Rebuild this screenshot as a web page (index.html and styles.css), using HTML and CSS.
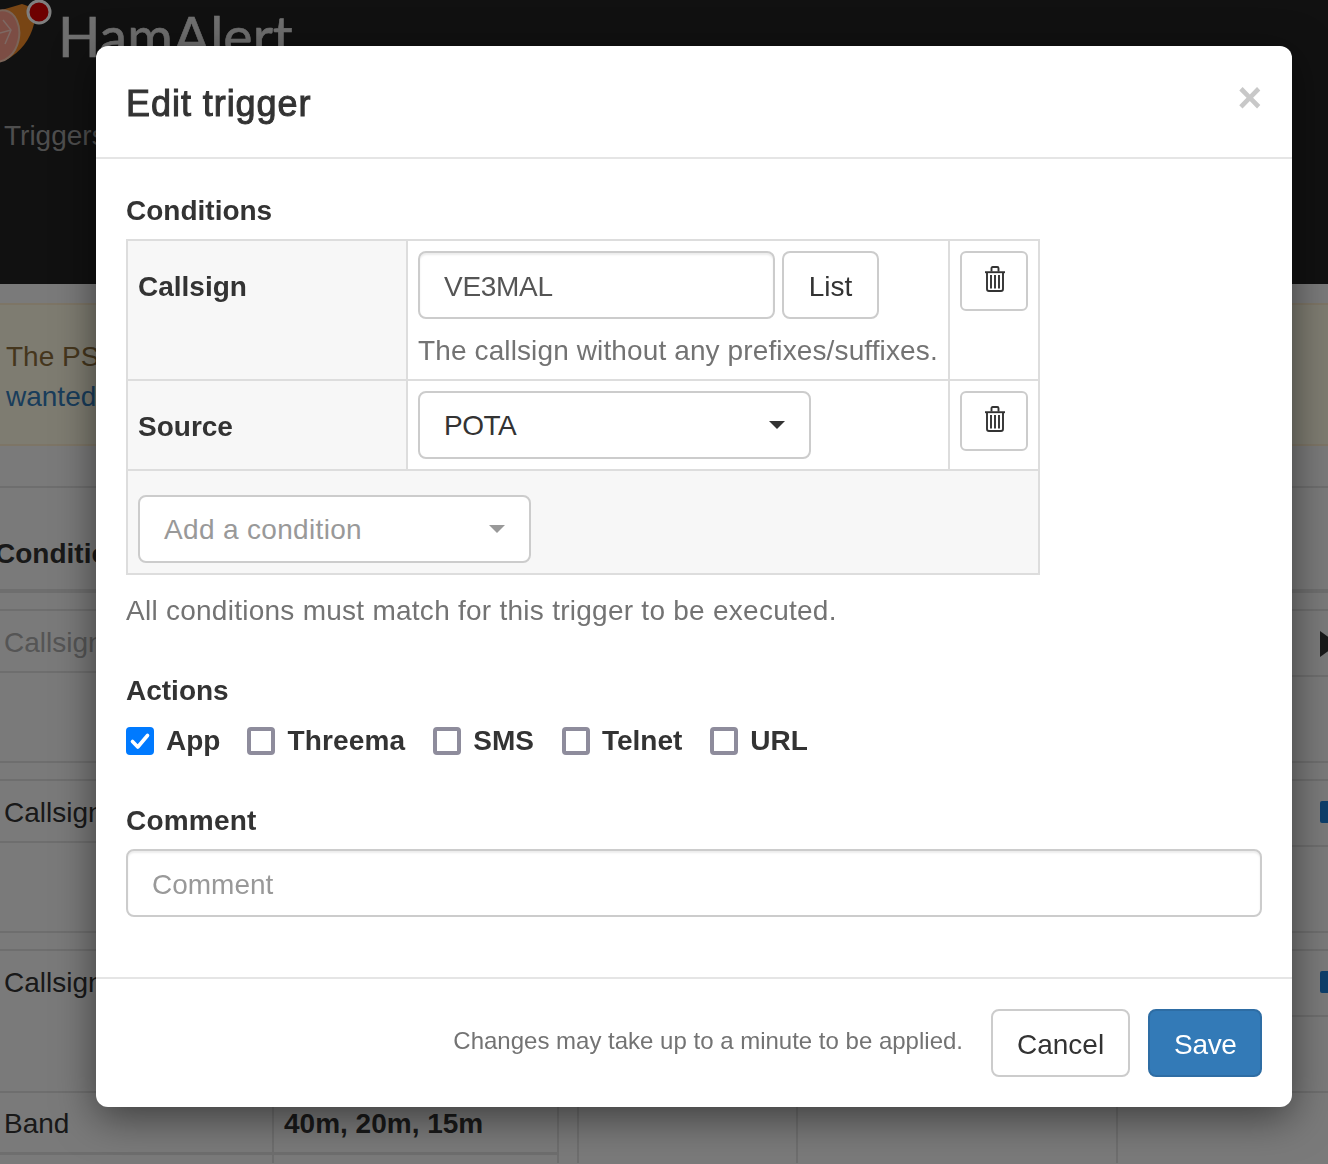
FILE: index.html
```html
<!DOCTYPE html>
<html lang="en">
  <head>
    <meta charset="UTF-8" />
    <title>HamAlert</title>
    <link rel="stylesheet" href="styles.css">
  </head>
  <body>
    <!-- page behind the dialog -->
    <div class="page">
      <header class="topbar">
        <div class="brand">
          <svg class="brand-logo" width="60" height="66" viewBox="0 0 60 66">
            <path d="M-12 14 L22 4 Q38 8 34 24 Q28 48 6 60 L-12 62 Z" fill="#f08a28"/>
            <ellipse cx="0" cy="36" rx="19" ry="26" transform="rotate(12 0 36)" fill="#f89a88" stroke="#f5c8b0" stroke-width="2"/>
            <path d="M3 20 L11 30 L5 44 M-4 34 L11 30" fill="none" stroke="#fbd0c4" stroke-width="1.5"/>
            <circle cx="39" cy="12" r="11" fill="#dc0000" stroke="#fff" stroke-width="3"/>
          </svg>
          <span class="brand-name">HamAlert</span>
        </div>
        <div class="nav-link">Triggers</div>
      </header>

      <div class="alert">
        <div>The PSK Reporter feed is back</div>
        <a class="alert-link">wanted</a>
      </div>
      <hr class="divider" />
      <h2 class="list-title">Conditions</h2>

      <div class="row row-first">
        <div class="side side-left side-short"><span class="muted">Callsign</span></div>
        <div class="side side-right side-tall"><span class="marker-play"></span></div>
      </div>
      <div class="row row-next">
        <div class="side side-left side-short">Callsign</div>
        <div class="side side-right side-tall"><span class="marker-blue"></span></div>
      </div>
      <div class="row row-last">
        <div class="side side-left side-open">Callsign</div>
        <div class="side side-right side-tall"><span class="marker-blue"></span></div>
      </div>

      <div class="band-row">
        <div class="band-cell band-name">Band</div>
        <div class="band-cell band-value">40m, 20m, 15m</div>
        <div class="band-col band-col-a"></div>
        <div class="band-col band-col-b"></div>
      </div>
    </div>

    <div class="backdrop"></div>

    <div class="modal">
      <div class="modal-header">
        <h4 class="modal-title">Edit trigger</h4>
        <span class="close">&times;</span>
      </div>

      <div class="modal-body">
        <div class="section-label">Conditions</div>
        <table class="conditions">
          <tr class="cond-callsign">
            <th>Callsign</th>
            <td class="cond-main">
              <div class="input-line">
                <input class="form-control callsign-input" type="text" value="VE3MAL" />
                <button class="btn btn-list">List</button>
              </div>
              <div class="help-inline">The callsign without any prefixes/suffixes.</div>
            </td>
            <td class="cond-del">
              <button class="btn-del">
                <svg width="22" height="26" viewBox="0 0 22 26" fill="none" stroke="#333" stroke-width="1.9">
                  <path d="M1 6.2H21"/>
                  <path d="M7.5 5.5V2.2Q7.5 1 8.7 1H13.3Q14.5 1 14.5 2.2V5.5"/>
                  <path d="M3 6.5V23Q3 25 5 25H17Q19 25 19 23V6.5"/>
                  <path d="M7 9V22.5M11 9V22.5M15 9V22.5"/>
                </svg>
              </button>
            </td>
          </tr>
          <tr class="cond-source">
            <th>Source</th>
            <td class="cond-main">
              <div class="form-control select-box source-select">POTA<span class="caret"></span></div>
            </td>
            <td class="cond-del">
              <button class="btn-del">
                <svg width="22" height="26" viewBox="0 0 22 26" fill="none" stroke="#333" stroke-width="1.9">
                  <path d="M1 6.2H21"/>
                  <path d="M7.5 5.5V2.2Q7.5 1 8.7 1H13.3Q14.5 1 14.5 2.2V5.5"/>
                  <path d="M3 6.5V23Q3 25 5 25H17Q19 25 19 23V6.5"/>
                  <path d="M7 9V22.5M11 9V22.5M15 9V22.5"/>
                </svg>
              </button>
            </td>
          </tr>
          <tr class="cond-add">
            <td colspan="3">
              <div class="form-control select-box add-select">Add a condition<span class="caret caret-light"></span></div>
            </td>
          </tr>
        </table>
        <p class="help-block">All conditions must match for this trigger to be executed.</p>

        <div class="section-label actions-label">Actions</div>
        <div class="actions">
          <label class="check check-app"><span class="box box-on">
            <svg width="28" height="28" viewBox="0 0 28 28"><path d="M6.5 14.5L11.8 20L21.5 8.5" fill="none" stroke="#fff" stroke-width="3.6" stroke-linecap="round" stroke-linejoin="round"/></svg>
          </span>App</label>
          <label class="check check-threema"><span class="box"></span>Threema</label>
          <label class="check"><span class="box"></span>SMS</label>
          <label class="check"><span class="box"></span>Telnet</label>
          <label class="check"><span class="box"></span>URL</label>
        </div>

        <div class="section-label comment-label">Comment</div>
        <input class="form-control comment-input" type="text" placeholder="Comment" />
      </div>

      <div class="modal-footer">
        <span class="footer-note">Changes may take up to a minute to be applied.</span>
        <button class="btn btn-cancel">Cancel</button>
        <button class="btn btn-save">Save</button>
      </div>
    </div>
  </body>
</html>
```

FILE: styles.css
```css
* {
  box-sizing: border-box;
}

html,
body {
  margin: 0;
  height: 1164px;
  overflow: hidden;
}

body {
  background: #f5f5f5;
  color: #333;
  font-family: "Liberation Sans", Arial, sans-serif;
  font-size: 28px;
}

/* page behind the dialog */
.page {
  height: 1164px;
  overflow: hidden;
}

.topbar {
  height: 284px;
  background: #222;
  overflow: hidden;
}

.brand {
  display: flex;
  height: 86px;
}

.brand-logo {
  flex: none;
}

.brand-name {
  margin-left: -2px;
  font-family: Lato, sans-serif;
  font-size: 55.5px;
  line-height: 72px;
  color: #e0e0e0;
  -webkit-text-stroke: 0.6px #e0e0e0;
}

.nav-link {
  padding-left: 4px;
  line-height: 100px;
  color: #9d9d9d;
}

.alert {
  height: 143px;
  margin-top: 19px;
  padding: 32px 6px 0;
  background: #fcf8e3;
  border: 2px solid #faebcc;
  border-width: 2px 0;
  color: #8a6d3b;
  line-height: 40px;
}

.alert-link {
  color: #337ab7;
}

.divider {
  margin: 40px 0 0;
  border: 0;
  border-top: 2px solid #ddd;
}

.list-title {
  height: 105px;
  margin: 0 0 0 -5px;
  padding-top: 48px;
  font-size: 28px;
  line-height: 36px;
  color: #333;
  border-bottom: 4px solid #ddd;
}

.row {
  display: flex;
  justify-content: space-between;
  border-top: 2px solid #ddd;
}

.row-first,
.row-next {
  height: 154px;
  margin-top: 16px;
  border-bottom: 2px solid #ddd;
}

.row-last {
  height: 142px;
  margin-top: 16px;
}

.side {
  padding-top: 14px;
  line-height: 36px;
}

.side-left {
  width: 100px;
  padding-left: 4px;
  white-space: nowrap;
}

.side-short,
.side-open {
  height: 62px;
}

.side-short {
  border-bottom: 2px solid #ddd;
}

.side-right {
  width: 36px;
  padding-left: 28px;
  padding-top: 20px;
}

.side-tall {
  height: 66px;
  border-bottom: 2px solid #ddd;
}

.muted {
  color: #aaa;
}

.marker-play {
  display: block;
  width: 0;
  height: 0;
  border-style: solid;
  border-width: 13px 0 13px 18px;
  border-color: transparent transparent transparent #333;
}

.marker-blue {
  display: block;
  width: 8px;
  height: 22px;
  border-radius: 2px 0 0 2px;
  background: #1c7fd6;
}

.band-row {
  display: flex;
  height: 72px;
  border-top: 2px solid #ddd;
}

.band-cell {
  padding: 13px 0 0 4px;
  line-height: 36px;
  background: linear-gradient(#ddd, #ddd) 0 59px / 100% 3px no-repeat;
  border-right: 2px solid #ddd;
}

.band-name {
  width: 274px;
}

.band-value {
  width: 285px;
  padding-left: 10px;
  font-weight: bold;
}

.band-col {
  border-right: 2px solid #ddd;
}

.band-col-a {
  width: 221px;
  margin-left: 18px;
  border-left: 2px solid #ddd;
}

.band-col-b {
  width: 320px;
}

.backdrop {
  position: fixed;
  top: 0;
  left: 0;
  width: 100%;
  height: 100%;
  background: rgba(0, 0, 0, 0.5);
}

/* dialog */
.modal {
  position: absolute;
  top: 46px;
  left: 96px;
  width: 1196px;
  height: 1061px;
  background: #fff;
  border-radius: 12px;
  box-shadow: 0 10px 40px rgba(0, 0, 0, 0.5);
}

.modal-header {
  display: flex;
  justify-content: space-between;
  height: 113px;
  padding: 31px 30px 0;
  border-bottom: 2px solid #e5e5e5;
}

.modal-title {
  margin: 0;
  font-size: 36px;
  font-weight: normal;
  line-height: 54px;
  letter-spacing: 0.95px;
  -webkit-text-stroke: 1px #333;
}

.close {
  margin-top: -1px;
  font-size: 42px;
  font-weight: bold;
  line-height: 44px;
  color: #c8c8c8;
}

.modal-body {
  height: 820px;
  padding: 32px 30px 0;
  border-bottom: 2px solid #e5e5e5;
}

.section-label {
  font-weight: bold;
  line-height: 40px;
}

.conditions {
  width: 914px;
  margin-top: 8px;
  border-collapse: collapse;
  table-layout: fixed;
}

.conditions th,
.conditions td {
  padding: 10px;
  border: 2px solid #ddd;
  vertical-align: top;
}

.conditions th {
  width: 280px;
  padding: 12px 10px 0;
  background: #f7f7f7;
  text-align: left;
  line-height: 68px;
}

.conditions .cond-main {
  width: 542px;
  padding-bottom: 8px;
}

.cond-del {
  width: 90px;
}

.cond-callsign {
  height: 140px;
}

.cond-source {
  height: 90px;
}

.conditions .cond-add td {
  height: 104px;
  padding: 24px 10px 0;
  background: #f7f7f7;
}

.input-line {
  display: flex;
  gap: 7px;
}

.form-control {
  display: block;
  height: 68px;
  padding: 3px 24px 0;
  background: #fff;
  border: 2px solid #ccc;
  border-radius: 8px;
  color: #555;
  font-family: inherit;
  font-size: 28px;
  line-height: 64px;
  box-shadow: inset 0 2px 2px rgba(0, 0, 0, 0.08);
}

.form-control::placeholder {
  color: #999;
  opacity: 1;
}

.callsign-input {
  width: 357px;
  letter-spacing: -0.3px;
}

.select-box {
  position: relative;
  padding-top: 0;
  line-height: 66px;
  color: #333;
  box-shadow: none;
}

.source-select {
  width: 393px;
  letter-spacing: -0.5px;
}

.add-select {
  width: 393px;
  color: #999;
  letter-spacing: 0.33px;
}

.caret {
  position: absolute;
  top: 28px;
  right: 24px;
  width: 0;
  height: 0;
  border-style: solid;
  border-width: 8px 8px 0;
  border-color: #333 transparent transparent;
}

.caret-light {
  border-top-color: #999;
}

.btn {
  height: 68px;
  padding: 4px 24px 0;
  background: #fff;
  border: 2px solid #ccc;
  border-radius: 8px;
  color: #333;
  font-family: inherit;
  font-size: 28px;
}

.btn-list {
  width: 97px;
  padding-left: 0;
  padding-right: 0;
}

.help-inline {
  margin-top: 12px;
  color: #737373;
  line-height: 40px;
  letter-spacing: 0.12px;
  white-space: nowrap;
}

.btn-del {
  display: flex;
  align-items: center;
  justify-content: center;
  width: 68px;
  height: 60px;
  padding: 0 0 4px 2px;
  background: #fff;
  border: 2px solid #ccc;
  border-radius: 6px;
}

.help-block {
  margin: 16px 0 0;
  color: #737373;
  line-height: 40px;
  letter-spacing: 0.26px;
}

.actions-label {
  margin-top: 40px;
}

.actions {
  display: flex;
  gap: 28px;
  margin-top: 10px;
}

.check {
  display: flex;
  align-items: center;
  gap: 12px;
  font-weight: bold;
  line-height: 40px;
}

.check-app {
  margin-right: -1px;
}

.check-threema {
  letter-spacing: 0.15px;
}

.box {
  width: 28px;
  height: 28px;
  border: 4px solid #8e8c9c;
  border-radius: 4px;
}

.box-on {
  background: #007aff;
  border: 0;
}

.box-on svg {
  display: block;
}

.comment-label {
  margin-top: 40px;
  letter-spacing: 0.2px;
}

.comment-input {
  width: 1136px;
  margin-top: 8px;
}

.modal-footer {
  display: flex;
  align-items: flex-start;
  justify-content: flex-end;
  padding: 30px 30px 0;
}

.footer-note {
  margin-right: 28px;
  font-size: 24px;
  line-height: 64px;
  color: #737373;
}

.btn-cancel {
  width: 139px;
  margin-right: 18px;
}

.btn-save {
  width: 114px;
  background: #337ab7;
  border-color: #2e6da4;
  color: #fff;
  letter-spacing: -0.3px;
}
```
